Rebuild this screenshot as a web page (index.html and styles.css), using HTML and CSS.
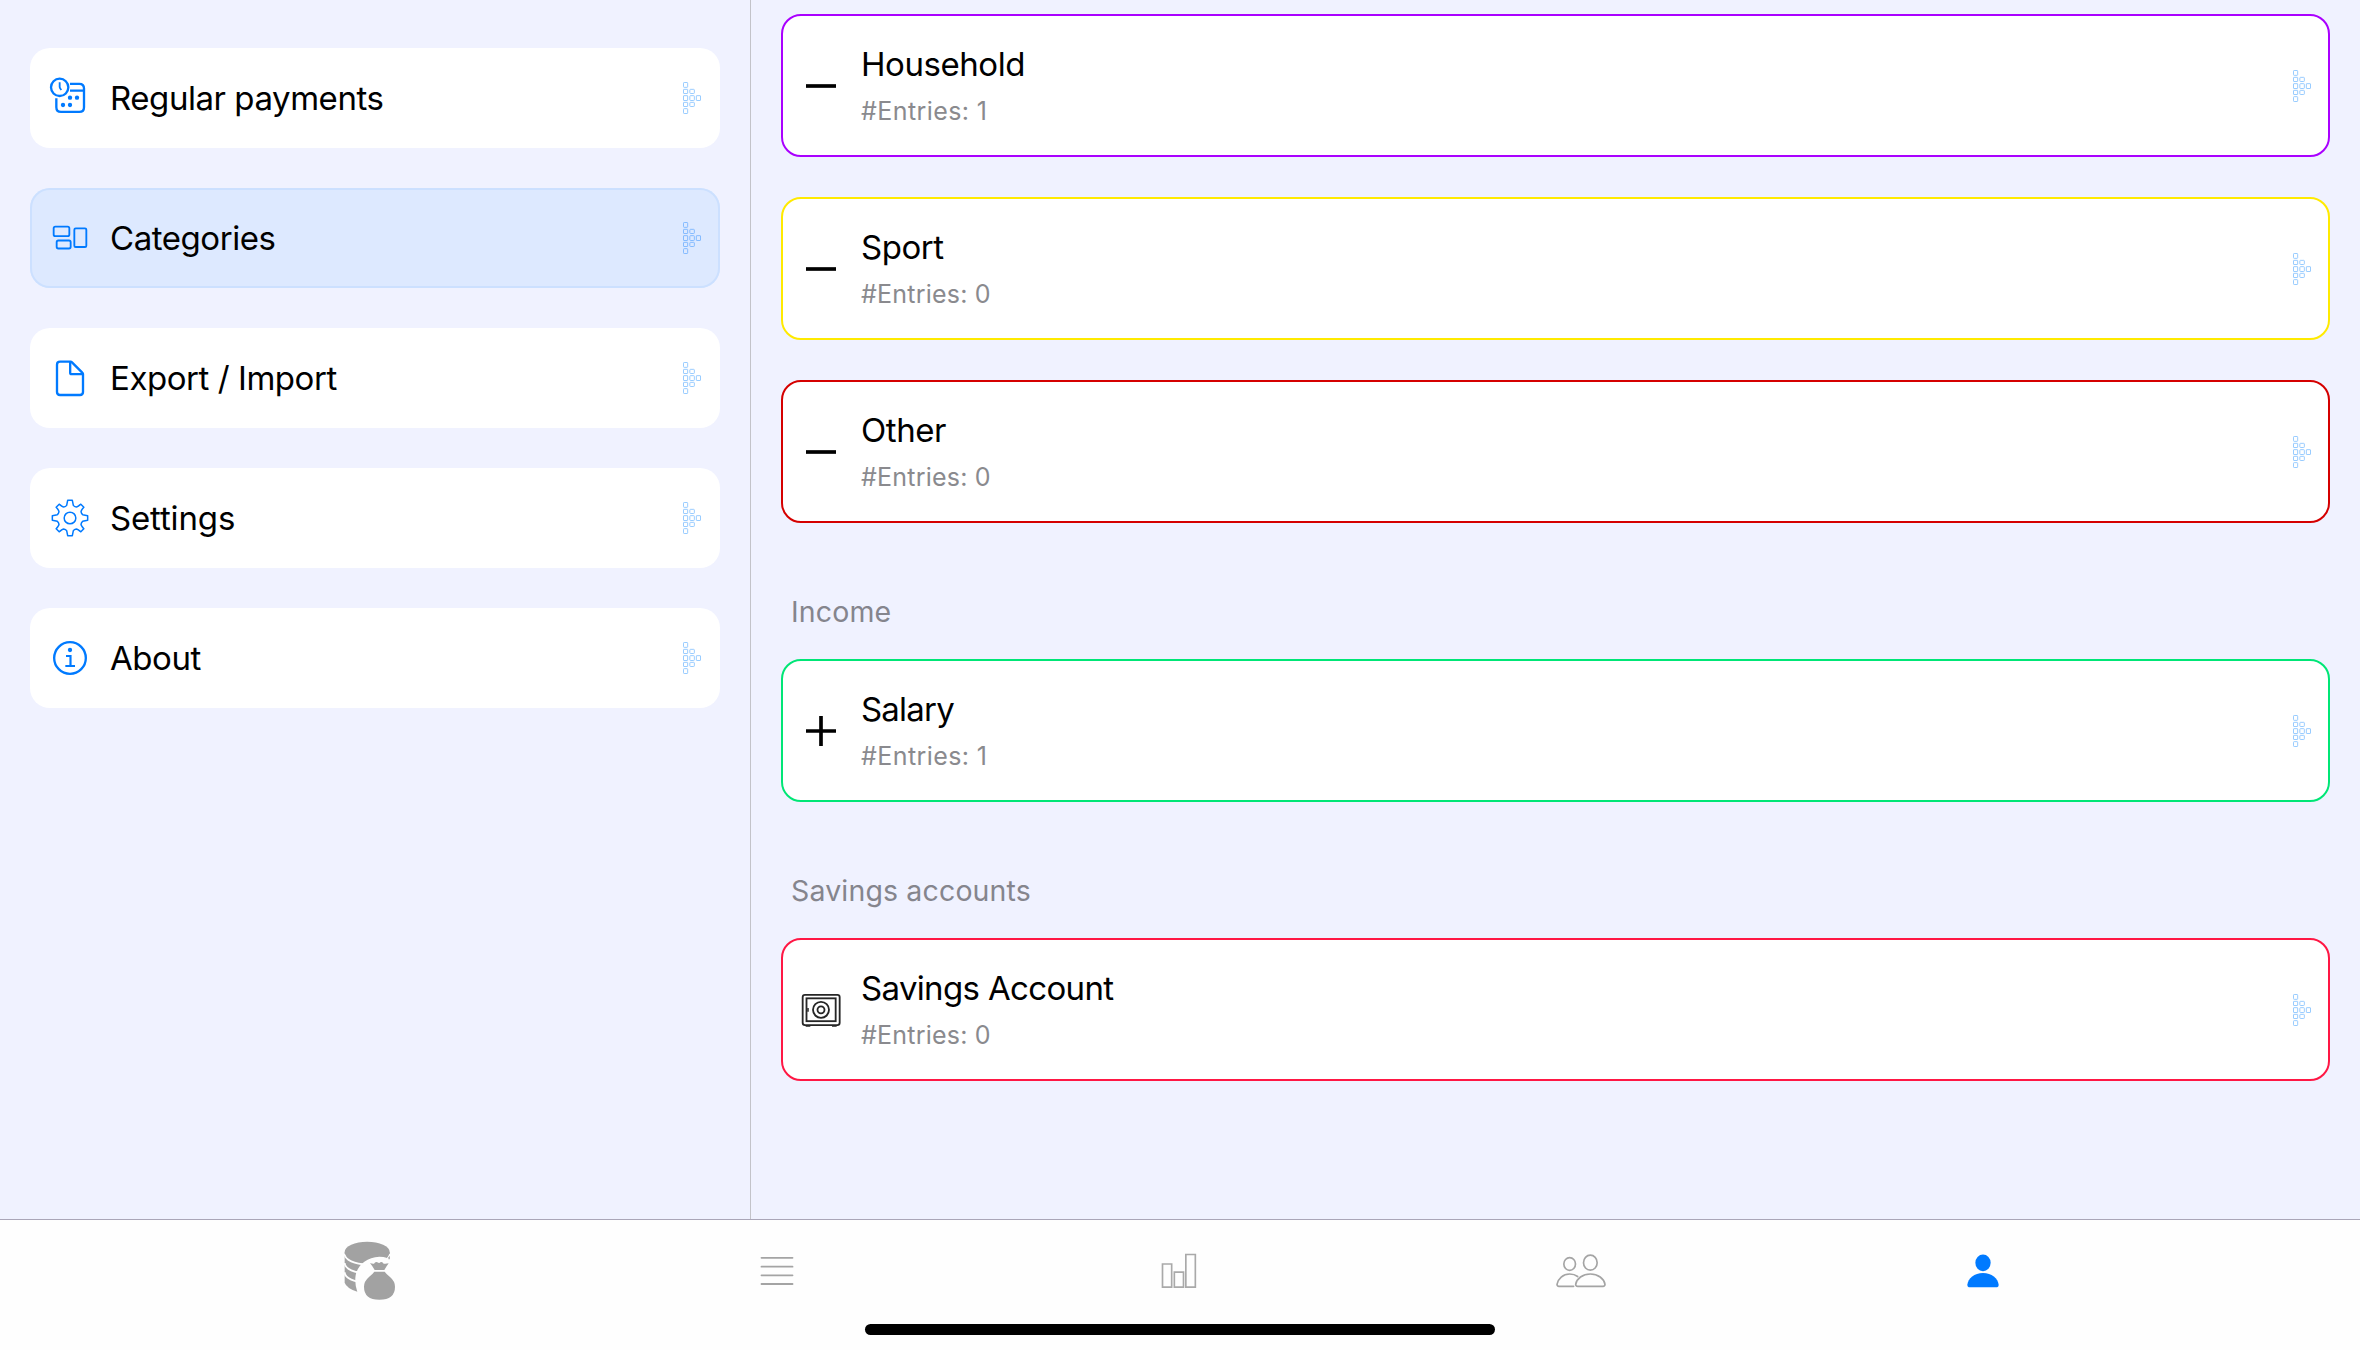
FILE: index.html
```html
<!DOCTYPE html>
<html lang="en">
<head>
<meta charset="utf-8">
<title>Categories</title>
<link rel="stylesheet" href="styles.css">
</head>
<body>
<svg class="defs" aria-hidden="true">
  <symbol id="arrow" viewBox="0 0 54 96">
    <g fill="none" stroke="currentColor" stroke-width="3">
      <rect x="1.5" y="1.5" width="12.5" height="14.5" rx="2"/>
      <rect x="1.5" y="22" width="12.5" height="12.5" rx="1"/>
      <rect x="1.5" y="41" width="12.5" height="14.5" rx="1"/>
      <rect x="1.5" y="61" width="12.5" height="12.5" rx="1"/>
      <rect x="1.5" y="80" width="12.5" height="14.5" rx="2"/>
      <rect x="20.5" y="22" width="13.5" height="12.5" rx="2"/>
      <rect x="20.5" y="41" width="13.5" height="14.5" rx="2"/>
      <rect x="20.5" y="61" width="13.5" height="12.5" rx="2"/>
      <rect x="40" y="41" width="12.5" height="14.5" rx="1"/>
    </g>
  </symbol>
  <symbol id="minus" viewBox="177 192 132 129">
    <rect x="198" y="252.500" width="90" height="11"/>
  </symbol>
</svg>
<main class="panes">
  <nav class="sidebar">
    <a class="item">
      <svg class="icon" viewBox="84 108 132 132" fill="none" stroke="currentColor" stroke-width="7" stroke-linecap="butt">
        <circle cx="119" cy="142" r="26"/>
        <path d="M119 127v14q0 3 5 9" stroke-width="5.500"/>
        <path d="M150 131.500h28q14 0 14 14v56q0 14-14 14h-55q-14 0-14-14v-27M150 152h42"/>
        <g fill="currentColor" stroke="none"><circle cx="150" cy="173" r="6.500"/><circle cx="171" cy="173" r="6.500"/><circle cx="129" cy="195" r="6.500"/><circle cx="150" cy="195" r="6.500"/></g>
      </svg>
      <span class="label">Regular payments</span>
      <svg class="arrow"><use href="#arrow"/></svg>
    </a>
    <a class="item selected">
      <svg class="icon" viewBox="84 528 132 132" fill="none" stroke="currentColor" stroke-width="5.500">
        <rect x="101" y="560" width="47" height="28.500" rx="5"/>
        <rect x="110" y="601.500" width="42" height="24" rx="5"/>
        <rect x="163" y="565" width="36" height="56" rx="4"/>
      </svg>
      <span class="label">Categories</span>
      <svg class="arrow"><use href="#arrow"/></svg>
    </a>
    <a class="item">
      <svg class="icon" viewBox="84 108 132 132" fill="none" stroke="currentColor" stroke-width="7" stroke-linejoin="round">
        <path d="M120 125h32q2 0 4 2l30 30q3 3 3 5v54q0 9-9 9h-60q-9 0-9-9v-82q0-9 9-9z"/>
        <path d="M150.500 126v32q0 4.500 4.500 4.500h33"/>
      </svg>
      <span class="label">Export / Import</span>
      <svg class="arrow"><use href="#arrow"/></svg>
    </a>
    <a class="item">
      <svg class="icon" viewBox="84 528 132 132" fill="none" stroke="currentColor" stroke-width="4.500" stroke-linejoin="round">
        <g transform="translate(150 594)">
          <circle r="17.500"/>
          <path d="M-7-53H7L10-38Q13-34 19-33Q23-33 32.500-41.500L41.500-32.500Q33-23 33-19Q34-13 38-10L53-7V7L38 10Q34 13 33 19Q33 23 41.500 32.500L32.500 41.500Q23 33 19 33Q13 34 10 38L7 53H-7L-10 38Q-13 34-19 33Q-23 33-32.500 41.500L-41.500 32.500Q-33 23-33 19Q-34 13-38 10L-53 7V-7L-38-10Q-34-13-33-19Q-33-23-41.500-32.500L-32.500-41.500Q-23-33-19-33Q-13-34-10-38Z"/>
        </g>
      </svg>
      <span class="label wide">Settings</span>
      <svg class="arrow"><use href="#arrow"/></svg>
    </a>
    <a class="item">
      <svg class="icon" viewBox="84 948 132 132" fill="none" stroke="currentColor" stroke-width="7">
        <circle cx="150" cy="1014" r="47.500"/>
        <circle cx="150" cy="990" r="6.500" fill="currentColor" stroke="none"/>
        <path d="M138 1008h13.500v30M136 1038h29" stroke-width="6.500"/>
      </svg>
      <span class="label">About</span>
      <svg class="arrow"><use href="#arrow"/></svg>
    </a>
  </nav>
  <section class="content">
    <div class="group">
      <a class="card household">
        <svg class="icon"><use href="#minus"/></svg>
        <div class="text"><span class="title">Household</span><span class="sub narrow-digit">#Entries: 1</span></div>
        <svg class="arrow"><use href="#arrow"/></svg>
      </a>
      <a class="card sport">
        <svg class="icon"><use href="#minus"/></svg>
        <div class="text"><span class="title">Sport</span><span class="sub">#Entries: 0</span></div>
        <svg class="arrow"><use href="#arrow"/></svg>
      </a>
      <a class="card other">
        <svg class="icon"><use href="#minus"/></svg>
        <div class="text"><span class="title">Other</span><span class="sub">#Entries: 0</span></div>
        <svg class="arrow"><use href="#arrow"/></svg>
      </a>
    </div>
    <h2 class="heading">Income</h2>
    <a class="card salary">
      <svg class="icon" viewBox="87 417 132 129"><path d="M108 477.500h39.500v-39.500h11v39.500h39.500v11h-39.500v39.500h-11v-39.500h-39.500z"/></svg>
      <div class="text"><span class="title tighter">Salary</span><span class="sub narrow-digit">#Entries: 1</span></div>
      <svg class="arrow"><use href="#arrow"/></svg>
    </a>
    <h2 class="heading">Savings accounts</h2>
    <a class="card savings">
      <svg class="icon" viewBox="87 384 132 129" fill="none" stroke="#262626" stroke-width="5.500">
        <rect x="98" y="404.500" width="111" height="91" rx="7"/>
        <rect x="109.500" y="415" width="87.500" height="68.500"/>
        <circle cx="153" cy="449.500" r="24"/>
        <circle cx="153" cy="449.500" r="10.500"/>
        <path d="M114 444v11M107 498h14M186 498h14" stroke-width="4.500"/>
      </svg>
      <div class="text"><span class="title tight">Savings Account</span><span class="sub">#Entries: 0</span></div>
      <svg class="arrow"><use href="#arrow"/></svg>
    </a>
  </section>
</main>
<footer class="tabbar">
  <div class="tabs">
    <a class="tab">
      <svg viewBox="69 120 192 192">
        <path d="M74 156H209V260L112 275Q80 265 74 248Z" fill="#a2a2a2"/>
        <path d="M74 162a67.500 31 0 0 0 135 0M74 189a67.500 31 0 0 0 135 0M74 217a67.500 31 0 0 0 135 0" fill="none" stroke="#fefefe" stroke-width="5.500"/>
        <ellipse cx="141.500" cy="156" rx="67.500" ry="31" fill="#a2a2a2"/>
        <path d="M112 276Q103 250 107 226Q112 200 133 185Q152 171 178 170Q192 170 199 173L206 178H214V290H112Z" fill="#fefefe"/>
        <path d="M204 174L209 167V176Z" fill="#a2a2a2"/>
        <path d="M150 189Q157 192 162 191Q166 184 172 187Q178 191 181 187Q187 184 191 191Q198 192 206 190Q200 198 193 210H164Q158 199 150 189ZM163 215H194Q199 222 210 231Q225 244 225 260Q225 299 178 299Q132 299 132 260Q132 244 147 231Q158 222 163 215Z" fill="#a2a2a2"/>
      </svg>
    </a>
    <a class="tab">
      <svg viewBox="1275 120 192 192" fill="none" stroke="#a4a4a4" stroke-width="5.500" stroke-linecap="round">
        <path d="M1324.500 173.500h93M1324.500 200h93M1324.500 226h93M1324.500 252h93"/>
      </svg>
    </a>
    <a class="tab">
      <svg viewBox="81 120 192 192" fill="none" stroke="#a9a9a9" stroke-width="5">
        <path d="M127.500 192h27.500v69.500h-27.500zM163 216.500h27.500v45h-27.500zM197.500 163.500h28.500v98h-28.500z"/>
      </svg>
    </a>
    <a class="tab">
      <svg viewBox="1287 120 192 192" fill="none" stroke="#a4a4a4" stroke-width="5" stroke-linecap="round">
        <ellipse cx="1349" cy="192" rx="17.500" ry="19"/>
        <ellipse cx="1411" cy="188" rx="20.500" ry="22.500"/>
        <path d="M1361 259h-44q-6 0-6-6c3-17 18-31 38-31q14 0 24 7.500"/>
        <path d="M1373 259q-6 0-6-6c3-17 21-31 44-31s41 14 44 31q0 6-6 6z"/>
      </svg>
    </a>
    <a class="tab">
      <svg viewBox="153 120 192 192" fill="#007aff">
        <ellipse cx="249" cy="188.500" rx="23" ry="25"/>
        <path d="M210 262q-8 0-8-8c2-18 21-35 47-35s45 17 47 35q0 8-8 8z"/>
      </svg>
    </a>
  </div>
  <div class="home"></div>
</footer>
</body>
</html>
```
FILE: styles.css
```css
* { box-sizing: border-box; }

body {
  margin: 0;
  height: 1350px;
  display: flex;
  flex-direction: column;
  overflow: hidden;
  background: #f0f2ff;
  color: #000;
  font-family: Inter, "Liberation Sans", sans-serif;
}

svg { display: block; flex: none; }
.defs { display: none; }

.panes { display: flex; height: 1219px; flex: none; }

.sidebar {
  width: 751px;
  flex: none;
  padding: 48px 30px 0;
  border-right: 1px solid #c3c3c9;
  display: flex;
  flex-direction: column;
  gap: 40px;
}

.item {
  height: 100px;
  padding: 0 19px 0 18px;
  border-radius: 20px;
  background: #fff;
  display: flex;
  align-items: center;
}

.item .icon { width: 44px; height: 44px; color: #007aff; }

.selected {
  background: #dde9ff;
  box-shadow: inset 0 0 0 2px #cce0ff;
}

.label, .title {
  font-size: 33px;
  line-height: 40px;
  letter-spacing: -0.45px;
  white-space: nowrap;
}

.label { flex: 1; margin-left: 18px; }
.wide { letter-spacing: -0.15px; }
.tight { letter-spacing: -0.66px; }
.tighter { letter-spacing: -0.8px; }

.arrow { width: 18px; height: 32px; color: #99ccff; }
.selected .arrow { color: #85bbff; }

.content { flex: 1; padding: 14px 30px 0; }
.group { display: flex; flex-direction: column; gap: 40px; }

.card {
  height: 143px;
  padding: 0 17px 0 16px;
  border: 2px solid;
  border-radius: 20px;
  background: #fff;
  display: flex;
  align-items: center;
}

.card .icon { width: 44px; height: 43px; }
.card .arrow { margin-top: 1px; }

.household { border-color: #aa00ff; }
.sport { border-color: #ffea00; }
.other { border-color: #d50000; }
.salary { border-color: #00e676; }
.savings { border-color: #ff1744; }

.text {
  flex: 1;
  align-self: flex-start;
  padding-top: 28px;
  margin-left: 18px;
  display: flex;
  flex-direction: column;
  gap: 12px;
}

.sub {
  color: #8a8a8e;
  font-size: 25px;
  line-height: 30px;
  letter-spacing: 0.22px;
}

.narrow-digit { letter-spacing: 0.42px; }

.heading {
  margin: 72px 0 30px 10px;
  color: #85858d;
  font-size: 28.5px;
  font-weight: 400;
  line-height: 34px;
  letter-spacing: 0.15px;
}

.tabbar {
  flex: 1;
  background: #fefefe;
  border-top: 1px solid #aaa6b8;
  padding-top: 20px;
  display: flex;
  flex-direction: column;
  align-items: center;
}

.tabs { width: 2360px; padding: 0 176px 0 174px; display: flex; }
.tab { flex: 1; display: flex; justify-content: center; }
.tab svg { width: 64px; height: 64px; }

.home {
  width: 630px;
  height: 11px;
  margin-top: 20px;
  border-radius: 5.5px;
  background: #000;
}
```
